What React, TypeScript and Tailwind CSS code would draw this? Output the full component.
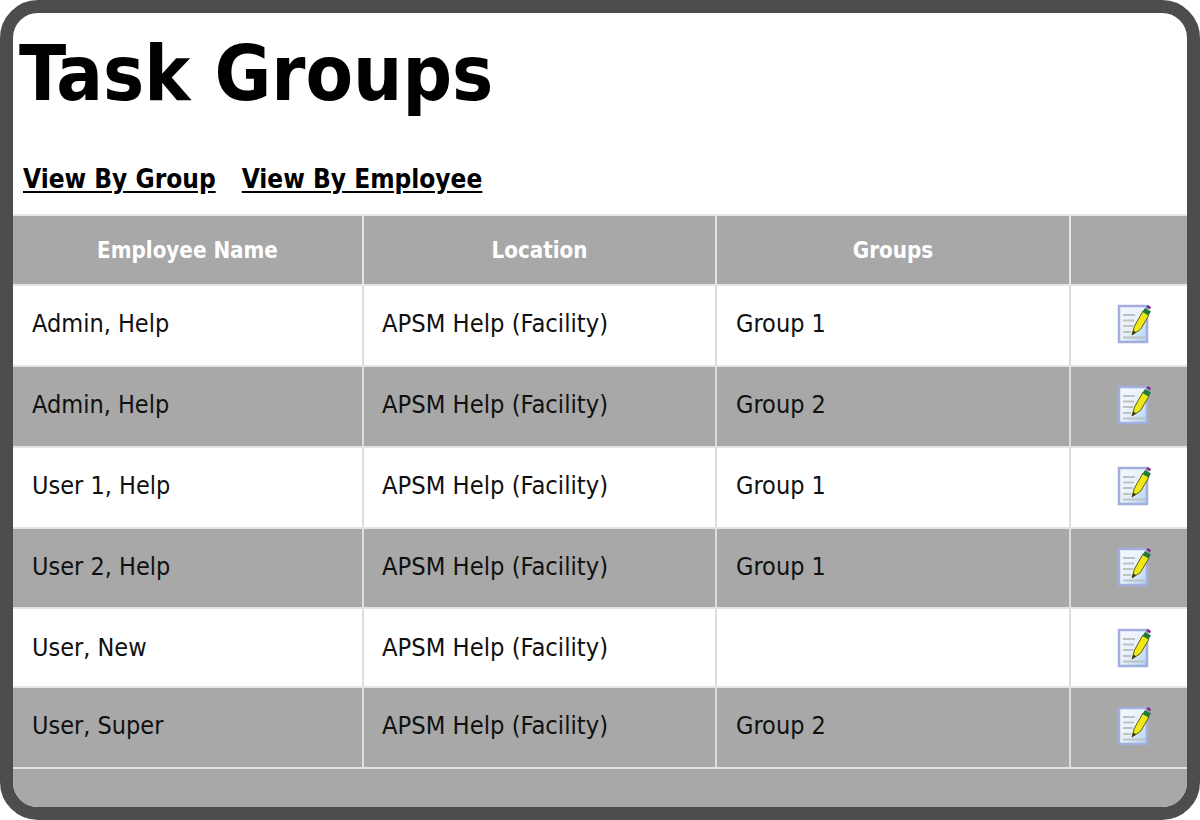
const font = { fontFamily: '"DejaVu Sans Condensed", "DejaVu Sans", sans-serif' };

interface Row {
  name: string;
  location: string;
  group: string;
  height: string;
  pad: string;
  shaded: boolean;
}

// row heights in the screenshot are uneven, the padding keeps the text where it sits there
const rows: Row[] = [
  { name: "Admin, Help", location: "APSM Help (Facility)", group: "Group 1", height: "h-[81px]", pad: "pb-[4px]", shaded: false },
  { name: "Admin, Help", location: "APSM Help (Facility)", group: "Group 2", height: "h-[81px]", pad: "pb-[4px]", shaded: true },
  { name: "User 1, Help", location: "APSM Help (Facility)", group: "Group 1", height: "h-[81px]", pad: "pb-[4px]", shaded: false },
  { name: "User 2, Help", location: "APSM Help (Facility)", group: "Group 1", height: "h-[80px]", pad: "pb-[2px]", shaded: true },
  { name: "User, New", location: "APSM Help (Facility)", group: "", height: "h-[79px]", pad: "pb-[0px]", shaded: false },
  { name: "User, Super", location: "APSM Help (Facility)", group: "Group 2", height: "h-[81px]", pad: "pb-[4px]", shaded: true },
];

function EditIcon() {
  return (
    <svg width="34" height="40" viewBox="0 0 34 40" className="block blur-[0.4px]">
      <defs>
        <linearGradient id="page" x1="0" y1="0" x2="1" y2="1">
          <stop offset="0" stopColor="#f6f9fe" />
          <stop offset="0.55" stopColor="#e6f0fb" />
          <stop offset="1" stopColor="#a6d0f4" />
        </linearGradient>
      </defs>
      <rect x="2" y="2" width="28" height="36" fill="url(#page)" stroke="#a4aede" strokeWidth="2.5" />
      <path d="M6 11h12M6 16.500h11M6 22h10M6 28h8M6 33.500h22" stroke="#c0c2c0" strokeWidth="2" />
      <path d="M15 31l2.500-9L26 7l6 4-8.500 14.500z" fill="#f0e814" stroke="#5e5c18" strokeWidth="1" />
      <path d="M15 31l1.200-4.500 3 1.800z" fill="#33321f" />
      <path d="M25.500 8l2.500-4 6 3.500-2.500 4z" fill="#1f7a3c" />
      <path d="M29 3l2-2 3 2-1 2.500z" fill="#7d2f86" />
    </svg>
  );
}

export default function App() {
  return (
    <div className="w-[1200px] h-[820px] bg-white overflow-hidden" style={font}>
      <div className="h-full border-[13px] border-[#4d4d4d] rounded-[38px] overflow-hidden flex flex-col bg-white">
        <h1 className="text-[77px] leading-[90px] font-bold text-black pl-[6px] pt-[16px] h-[131px]">Task Groups</h1>
        <div className="flex gap-[26px] pl-[10px] h-[70px] pt-[19px] text-[26px] leading-[32px] font-bold text-black">
          <a className="underline underline-offset-[3px]">View By Group</a>
          <a className="underline underline-offset-[3px]">View By Employee</a>
        </div>
        <div className="flex h-[72px] bg-[#a8a8a8] border-y-2 border-[#e4e4e4] text-[22.2px] font-bold text-white text-center">
          <div className="w-[351px] flex items-center justify-center pt-[2px] border-r-2 border-[#e4e4e4]">Employee Name</div>
          <div className="w-[353px] flex items-center justify-center pt-[2px] border-r-2 border-[#e4e4e4]">Location</div>
          <div className="w-[354px] flex items-center justify-center pt-[2px] border-r-2 border-[#e4e4e4]">Groups</div>
          <div className="flex-1"></div>
        </div>
        {rows.map((row, i) => (
          <div
            key={i}
            className={`flex ${row.height} border-b-2 border-[#e4e4e4] text-[25px] text-[#101010] ${row.shaded ? "bg-[#a8a8a8]" : "bg-white"}`}
          >
            <div className={`w-[351px] flex items-center pl-[19px] border-r-2 border-[#dcdcdc] ${row.pad}`}>{row.name}</div>
            <div className={`w-[353px] flex items-center pl-[18px] border-r-2 border-[#dcdcdc] text-[25.3px] ${row.pad}`}>{row.location}</div>
            <div className={`w-[354px] flex items-center pl-[19px] border-r-2 border-[#dcdcdc] ${row.pad}`}>{row.group}</div>
            <div className={`flex-1 flex items-center justify-center pl-[9px] ${row.pad}`}><EditIcon /></div>
          </div>
        ))}
        <div className="flex-1 bg-[#a8a8a8]"></div>
      </div>
    </div>
  );
}
